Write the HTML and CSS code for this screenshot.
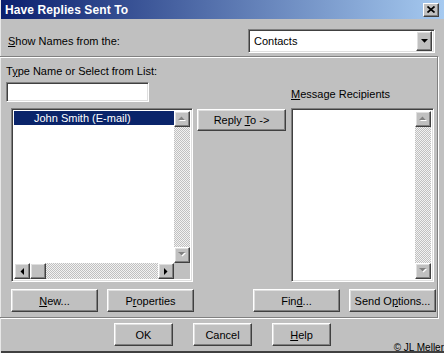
FILE: index.html
```html
<!DOCTYPE html>
<html lang="en">
<head>
  <meta charset="UTF-8" />
  <title>Have Replies Sent To</title>
  <link rel="stylesheet" href="styles.css">
</head>
<body>
  <div class="window">
    <div class="titlebar">
      <span class="title">Have Replies Sent To</span>
      <span class="close-btn">
        <svg width="8" height="7" viewBox="0 0 8 7"><path d="M0.5 0.5L7.5 6.5M7.5 0.5L0.5 6.5" stroke="#000" stroke-width="1.7"/></svg>
      </span>
    </div>

    <div class="source-row">
      <label class="lbl"><u>S</u>how Names from the:</label>
      <div class="combo">
        <span class="combo-text">Contacts</span>
        <span class="raised drop">
          <svg width="7" height="4" viewBox="0 0 7 4"><polygon points="0,0 7,0 3.5,3.8" fill="#000"/></svg>
        </span>
      </div>
    </div>

    <div class="panel">
      <div class="picker">
        <div class="type-box">
          <label class="lbl">T<u>y</u>pe Name or Select from List:</label>
          <div class="field"></div>
        </div>
        <label class="lbl recip-lbl"><u>M</u>essage Recipients</label>

        <div class="list names">
          <div class="list-body">
            <div class="item sel">John Smith (E-mail)</div>
          </div>
          <div class="vscroll">
            <span class="raised sbtn"><svg width="9" height="6" viewBox="0 0 9 6"><polygon points="1,5 8,5 4.5,1.5" fill="#fff"/><polygon points="0,4 7,4 3.5,0.5" fill="#808080"/></svg></span>
            <span class="track"></span>
            <span class="raised sbtn"><svg width="9" height="6" viewBox="0 0 9 6"><polygon points="1,1 8,1 4.5,4.5" fill="#fff"/><polygon points="0,0 7,0 3.5,3.5" fill="#808080"/></svg></span>
          </div>
          <div class="hscroll">
            <span class="raised sbtn"><svg width="4" height="7" viewBox="0 0 4 7"><polygon points="4,0 4,7 0.5,3.5" fill="#000"/></svg></span>
            <span class="raised thumb"></span>
            <span class="track"></span>
            <span class="raised sbtn"><svg width="4" height="7" viewBox="0 0 4 7"><polygon points="0,0 0,7 3.5,3.5" fill="#000"/></svg></span>
          </div>
          <span class="corner"></span>
        </div>

        <div class="raised btn reply"><span>Reply <u>T</u>o -&gt;</span></div>

        <div class="list recipients">
          <div class="list-body"></div>
          <div class="vscroll">
            <span class="raised sbtn"><svg width="9" height="6" viewBox="0 0 9 6"><polygon points="1,5 8,5 4.5,1.5" fill="#fff"/><polygon points="0,4 7,4 3.5,0.5" fill="#808080"/></svg></span>
            <span class="track"></span>
            <span class="raised sbtn"><svg width="9" height="6" viewBox="0 0 9 6"><polygon points="1,1 8,1 4.5,4.5" fill="#fff"/><polygon points="0,0 7,0 3.5,3.5" fill="#808080"/></svg></span>
          </div>
        </div>
      </div>

      <div class="actions">
        <div class="raised btn wide"><span><u>N</u>ew...</span></div>
        <div class="raised btn wide props"><span>P<u>r</u>operties</span></div>
        <div class="raised btn wide find"><span>Fin<u>d</u>...</span></div>
        <div class="raised btn wide options"><span>Send O<u>p</u>tions...</span></div>
      </div>
    </div>

    <div class="dialog-buttons">
      <div class="raised btn small"><span>OK</span></div>
      <div class="raised btn small"><span>Cancel</span></div>
      <div class="raised btn small"><span><u>H</u>elp</span></div>
    </div>

    <span class="credit">&copy; JL Meller</span>
  </div>
</body>
</html>
```

FILE: styles.css
```css
body {
  margin: 0;
  overflow: hidden;
  background: #c0c0c0;
  font-family: "Liberation Sans", Arial, sans-serif;
  font-size: 11px;
  color: #000;
}
.window {
  position: relative;
  width: 444px;
  height: 353px;
  background: #c0c0c0;
  box-shadow: inset 1px 0 #e8e8e8, inset 0 -2px #404040;
}
.titlebar {
  height: 19px;
  margin-left: 1px;
  display: flex;
  align-items: center;
  justify-content: space-between;
  background: linear-gradient(to right, #0a1f6e, #a6caf0);
}
.title {
  color: #fff;
  font-weight: bold;
  font-size: 12px;
  padding-left: 4px;
  letter-spacing: 0.1px;
}
.close-btn {
  width: 16px;
  height: 14px;
  margin-right: 5px;
  box-sizing: border-box;
  display: flex;
  align-items: center;
  justify-content: center;
  background: #c0c0c0;
  border: 1px solid;
  border-color: #fff #404040 #404040 #fff;
  box-shadow: inset -1px -1px #808080;
}

/* 3D borders */
.raised {
  box-sizing: border-box;
  background: #c0c0c0;
  border: 1px solid;
  border-color: #fff #404040 #404040 #fff;
  box-shadow: inset -1px -1px #808080, inset 1px 1px #dfdfdf;
}
.field, .combo, .list {
  box-sizing: border-box;
  background: #fff;
  border: 1px solid;
  border-color: #808080 #fff #fff #808080;
  box-shadow: inset 1px 1px #404040, inset -1px -1px #dfdfdf;
}

.lbl {
  display: block;
  line-height: 13px;
  white-space: nowrap;
}

.source-row {
  display: flex;
  align-items: center;
  margin-top: 10px;
  padding-left: 8px;
  padding-right: 9px;
}
.combo {
  margin-left: auto;
  width: 187px;
  height: 24px;
  padding: 2px;
  display: flex;
  align-items: center;
}
.combo-text {
  flex: 1;
  padding-left: 3px;
}
.drop {
  width: 16px;
  height: 20px;
  display: flex;
  align-items: center;
  justify-content: center;
}

.panel {
  width: 438px;
  box-sizing: border-box;
  margin-top: 3px;
  padding: 8px 0 5px;
  border: 1px solid #808080;
  border-left: none;
  box-shadow: inset 0 1px #fff, 1px 1px #fff;
}
.picker {
  display: grid;
  grid-template-columns: 187px 90px 143px;
  grid-template-rows: 37px 174px;
  grid-template-areas:
    "type . recip"
    "names reply rlist";
  column-gap: 4px;
  row-gap: 6px;
  padding-left: 6px;
}
.type-box {
  grid-area: type;
}
.field {
  margin-top: 4px;
  width: 143px;
  height: 20px;
}
.recip-lbl {
  grid-area: recip;
  align-self: end;
  margin-bottom: 1px;
}

.list {
  padding: 2px;
  display: grid;
  grid-template-columns: 1fr 16px;
  grid-template-rows: 1fr 16px;
}
.names {
  grid-area: names;
  margin-left: 5px;
}
.recipients {
  grid-area: rlist;
  grid-template-rows: 1fr;
}
.list-body {
  background: #fff;
  overflow: hidden;
}
.item {
  height: 14px;
  line-height: 14px;
  padding-left: 20px;
  white-space: nowrap;
}
.item.sel {
  background: #0a246a;
  color: #fff;
}

.vscroll {
  display: flex;
  flex-direction: column;
}
.hscroll {
  display: flex;
}
.sbtn, .thumb {
  width: 16px;
  height: 16px;
  flex: none;
  display: flex;
  align-items: center;
  justify-content: center;
}
.track {
  flex: 1;
  background: repeating-conic-gradient(#c0c0c0 0 25%, #f2f2f2 0 50%) 0 0 / 2px 2px;
}
.corner {
  background: #c0c0c0;
}

.btn {
  height: 23px;
  display: flex;
  align-items: center;
  justify-content: center;
  white-space: nowrap;
}
.reply {
  grid-area: reply;
  width: 89px;
  height: 22px;
  margin-top: 1px;
}

.actions {
  display: flex;
  margin-top: 7px;
  padding-left: 11px;
}
.wide {
  width: 87px;
}
.props {
  margin-left: 9px;
}
.find {
  margin-left: 59px;
}
.options {
  margin-left: 9px;
}

.dialog-buttons {
  display: flex;
  gap: 20px;
  margin-top: 5px;
  padding-left: 114px;
}
.small {
  width: 59px;
}

.credit {
  position: absolute;
  right: 0;
  bottom: 0;
  font-size: 10px;
  line-height: 11px;
  white-space: nowrap;
}
```
